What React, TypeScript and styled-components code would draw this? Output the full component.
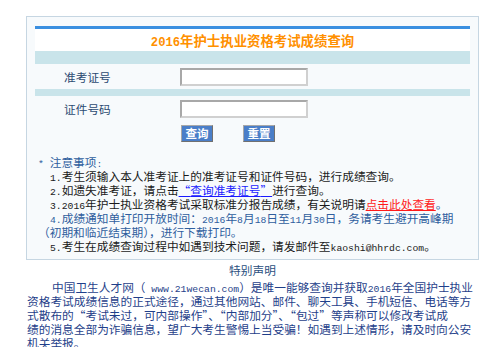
import styled, { createGlobalStyle } from "styled-components";

const GlobalStyle = createGlobalStyle`
  body {
    margin: 0;
    background: #ffffff;
    font-family: "Noto Sans CJK SC", "Liberation Sans", sans-serif;
    font-size: 11.7px;
    line-height: 14px;
    color: #1a1a1a;
    font-feature-settings: "fwid";
  }
`;

const Q = ({ children }: { children: string }) => (
  <>
    <Quote>“</Quote>
    {children}
    <Quote>”</Quote>
  </>
);

const App = () => {
  return (
    <>
      <GlobalStyle />
      <Page>
        <QueryBox>
          <TopBar />
          <Title>
            <TitleNum>2016</TitleNum>年护士执业资格考试成绩查询
          </Title>
          <Band $h={13} />
          <FieldRow>
            <Label>准考证号</Label>
            <Input type="text" />
          </FieldRow>
          <Band $h={7} />
          <FieldRow>
            <Label>证件号码</Label>
            <Input type="text" />
          </FieldRow>
          <ButtonRow>
            <Button type="button">查询</Button>
            <Button type="button">重置</Button>
          </ButtonRow>
          <Notes>
            <NoteHead>
              <Latin>* </Latin>注意事项<Latin>:</Latin>
            </NoteHead>
            <NoteItem>
              <Latin>1.</Latin>考生须输入本人准考证上的准考证号和证件号码，进行成绩查询。
            </NoteItem>
            <NoteItem>
              <Latin>2.</Latin>如遗失准考证，请点击
              <BlueLink href="#">
                <Q>查询准考证号</Q>
              </BlueLink>
              进行查询。
            </NoteItem>
            <NoteItem>
              <Latin>3.2016</Latin>年护士执业资格考试采取标准分报告成绩，有关说明请
              <RedLink href="#">点击此处查看</RedLink>
              <Accent>。</Accent>
            </NoteItem>
            <NoteItem $accent>
              <Latin>4.</Latin>成绩通知单打印开放时间：<Latin>2016</Latin>年<Latin>8</Latin>月
              <Latin>18</Latin>日至<Latin>11</Latin>月<Latin>30</Latin>日，务请考生避开高峰期
              <br />
              （初期和临近结束期），进行下载打印。
            </NoteItem>
            <NoteItem>
              <Latin>5.</Latin>考生在成绩查询过程中如遇到技术问题，请发邮件至
              <Latin>kaoshi@hhrdc.com</Latin>。
            </NoteItem>
          </Notes>
        </QueryBox>
        <StatementTitle>特别声明</StatementTitle>
        <Statement>
          中国卫生人才网（<Latin> www.21wecan.com</Latin>）是唯一能够查询并获取<Latin>2016</Latin>年全国护士执业
          <br />
          资格考试成绩信息的正式途径，通过其他网站、邮件、聊天工具、手机短信、电话等方
          <br />
          式散布的<Q>考试未过，可内部操作</Q>、<Q>内部加分</Q>、<Q>包过</Q>等声称可以修改考试成
          <br />
          绩的消息全部为诈骗信息，望广大考生警惕上当受骗！如遇到上述情形，请及时向公安
          <br />
          机关举报。
        </Statement>
      </Page>
    </>
  );
};

export default App;

const Page = styled.div`
  width: 453px;
  padding: 16px 0 0 26px;
`;

const QueryBox = styled.div`
  display: flex;
  flex-direction: column;
  border: 1px solid #c6d6e2;
  background: #f7fafc;
  padding: 9px 8px 6px 8px;
`;

const TopBar = styled.div`
  height: 3px;
  background: #3a8fe0;
`;

const Title = styled.div`
  height: 22px;
  line-height: 22px;
  background: #ffffff;
  text-align: center;
  color: #ff9000;
  font-size: 13.4px;
  font-weight: 700;
`;

const TitleNum = styled.span`
  font-family: "Liberation Mono", monospace;
  font-size: 12.2px;
  font-weight: 700;
  line-height: 0;
`;

const Band = styled.div<{ $h: number }>`
  height: ${(p) => p.$h}px;
  background: #c9e4ea;
`;

const FieldRow = styled.div`
  display: flex;
  align-items: center;
  height: 25px;
`;

const Label = styled.div`
  width: 145px;
  box-sizing: border-box;
  padding-left: 29px;
  color: #2c4a72;
`;

const Input = styled.input`
  width: 128px;
  height: 18px;
  box-sizing: border-box;
  margin: 0;
  padding: 0 3px;
  background: #ffffff;
  border: 2px solid #d0d0d0;
  border-top-color: #a8a8a8;
  border-left-color: #a8a8a8;
  outline: none;
`;

const ButtonRow = styled.div`
  display: flex;
  gap: 30px;
  padding: 4px 0 0 146px;
`;

const Button = styled.button`
  width: 32px;
  height: 17px;
  padding: 0;
  margin: 0;
  box-sizing: border-box;
  background: #4a7ec8;
  color: #ffffff;
  font-family: "Noto Sans CJK SC", sans-serif;
  font-size: 11.5px;
  font-weight: 700;
  line-height: 13px;
  border: 1px solid #a8a8a8;
  border-right-color: #707070;
  border-bottom-color: #707070;
  cursor: pointer;
`;

const Notes = styled.div`
  margin: 13px 0 0 3px;
`;

const Latin = styled.span`
  font-family: "Liberation Mono", monospace;
  font-size: 9.75px;
  line-height: 0;
`;

const Quote = styled.span`
  line-height: 0;
`;

const NoteHead = styled.div`
  color: #2f5e9e;
`;

const NoteItem = styled.div<{ $accent?: boolean }>`
  text-indent: 12px;
  color: ${(p) => (p.$accent ? "#2f5e9e" : "#1a1a1a")};
`;

const BlueLink = styled.a`
  color: #1a1aff;
  text-decoration: underline;
`;

const RedLink = styled.a`
  color: #ff1a1a;
  text-decoration: underline;
`;

const Accent = styled.span`
  color: #2f5e9e;
`;

const StatementTitle = styled.div`
  margin-top: 3px;
  text-align: center;
  color: #2a4f80;
`;

const Statement = styled.p`
  margin: 3px 0 0 1px;
  text-indent: 25px;
  color: #1f3f8a;
`;
